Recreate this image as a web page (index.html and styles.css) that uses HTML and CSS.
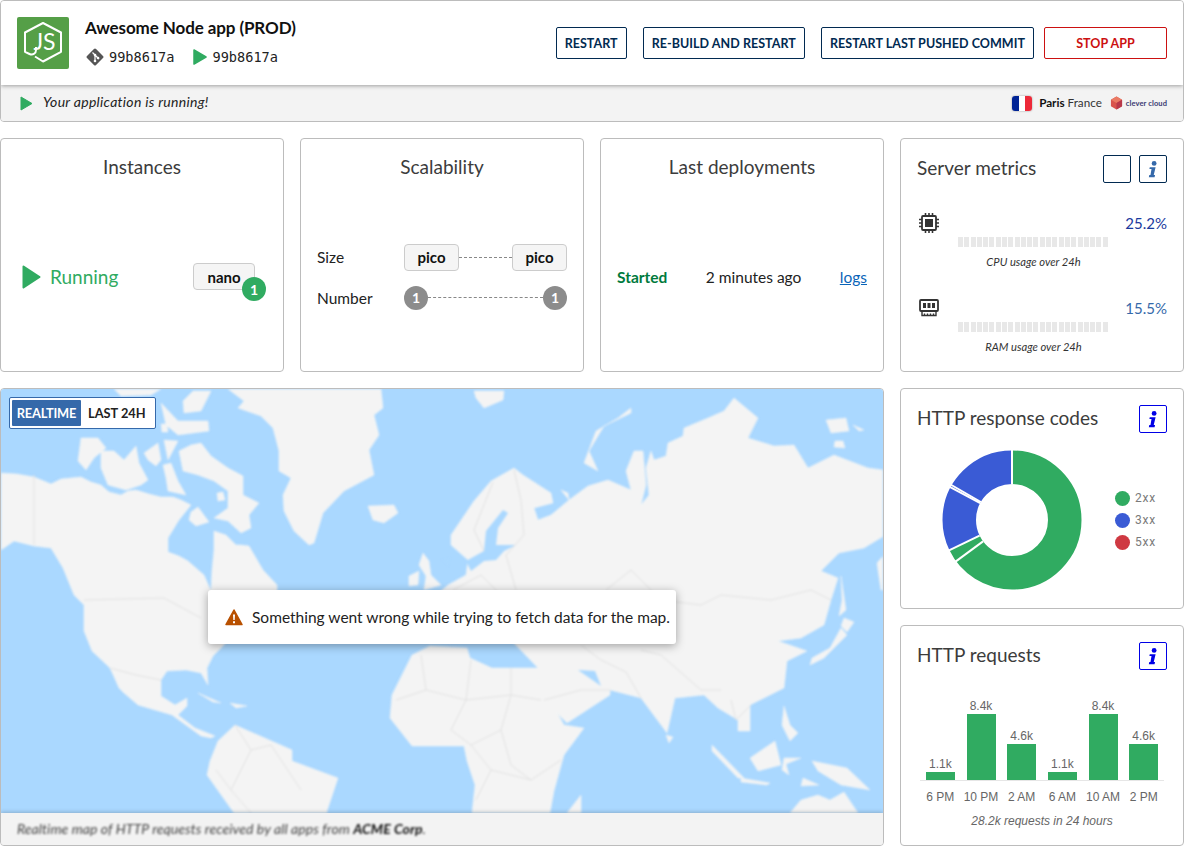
FILE: index.html
```html
<!DOCTYPE html>
<html lang="en">
<head>
<meta charset="utf-8">
<title>Awesome Node app</title>
<link rel="stylesheet" href="styles.css">
</head>
<body>
<div class="grid">
  <section class="card header">
    <div class="header-main">
      <svg class="app-logo" viewBox="0 0 52 52">
        <rect width="52" height="52" rx="2" fill="#559f47"/>
        <path class="logo-line" d="M18 39.500 L26 44.500 L44 34.800 V15.500 L26 6 L8 15.500 V34.800 L12.500 37 C15.500 38.200 19 37 19 33 V30"/>
        <text class="logo-text" x="27.500" y="33">JS</text>
      </svg>
      <div class="app-info">
        <div class="app-name">Awesome Node app (PROD)</div>
        <div class="commits">
          <span class="commit">
            <svg class="git-icon" viewBox="0 0 18 18"><rect x="2.600" y="2.600" width="12.800" height="12.800" rx="1.500" transform="rotate(45 9 9)" fill="#555"/><path d="M6.500 4.500 L13 11 M9 7 V13" stroke="#fff" stroke-width="1.200"/><circle cx="9" cy="7" r="1.300" fill="#fff"/><circle cx="9" cy="13" r="1.300" fill="#fff"/><circle cx="12" cy="10" r="1.300" fill="#fff"/></svg>
            <span class="hash">99b8617a</span>
          </span>
          <span class="commit">
            <svg class="play-icon" viewBox="0 0 14 16"><path d="M1 1 L13 8 L1 15 Z" fill="#30ab61" stroke="#30ab61" stroke-width="1.500" stroke-linejoin="round"/></svg>
            <span class="hash">99b8617a</span>
          </span>
        </div>
      </div>
      <div class="actions">
        <button class="btn">Restart</button>
        <button class="btn">Re-build and restart</button>
        <button class="btn">Restart last pushed commit</button>
        <button class="btn btn-danger">Stop app</button>
      </div>
    </div>
    <div class="header-band">
      <svg class="band-play" viewBox="0 0 13 15"><path d="M1 1 L12 7.500 L1 14 Z" fill="#30ab61" stroke="#30ab61" stroke-linejoin="round"/></svg>
      <span class="band-msg">Your application is running!</span>
      <span class="zone">
        <span class="flag"><i class="flag-b"></i><i class="flag-w"></i><i class="flag-r"></i></span>
        <span class="zone-name"><b>Paris</b> France</span>
        <svg class="cc-logo" viewBox="0 0 14 14"><path d="M7 0 L13 3.500 V10.500 L7 14 L1 10.500 V3.500 Z" fill="#d9544d"/><path d="M7 0 L13 3.500 L7 7 L1 3.500 Z" fill="#ea7a63"/><path d="M7 7 V14 L13 10.500 V3.500 Z" fill="#b8384a"/></svg>
        <span class="cc-name">clever cloud</span>
      </span>
    </div>
  </section>

  <section class="card tile">
    <h2 class="tile-title center">Instances</h2>
    <div class="tile-body instances">
      <svg class="run-icon" viewBox="0 0 19 24"><path d="M1.500 1.500 L17.500 12 L1.500 22.500 Z" fill="#30ab61" stroke="#30ab61" stroke-width="2" stroke-linejoin="round"/></svg>
      <span class="running">Running</span>
      <span class="flavor-wrap">
        <span class="flavor flavor-nano">nano</span>
        <span class="count count-green">1</span>
      </span>
    </div>
  </section>

  <section class="card tile">
    <h2 class="tile-title center">Scalability</h2>
    <div class="tile-body scal">
      <div class="scal-row">
        <span class="scal-label">Size</span>
        <span class="flavor">pico</span><span class="dash"></span><span class="flavor">pico</span>
      </div>
      <div class="scal-row">
        <span class="scal-label">Number</span>
        <span class="count count-gray">1</span><span class="dash"></span><span class="count count-gray">1</span>
      </div>
    </div>
  </section>

  <section class="card tile">
    <h2 class="tile-title center">Last deployments</h2>
    <div class="tile-body deploy">
      <span class="deploy-state">Started</span>
      <span class="deploy-time">2 minutes ago</span>
      <a class="deploy-logs" href="#">logs</a>
    </div>
  </section>

  <section class="card tile metrics">
    <div class="head-row">
      <h2 class="tile-title">Server metrics</h2>
      <button class="icon-btn"></button>
      <button class="icon-btn">
        <svg viewBox="0 0 28 28"><circle cx="15.200" cy="8" r="2.600" fill="#3569aa"/><path d="M10.500 12 H16.800 L14.800 20.500 H16.200 L15.700 22.800 H9.500 L10 20.500 H11.300 L12.400 14 H10.100 Z" fill="#3569aa"/></svg>
      </button>
    </div>
    <div class="metric metric-cpu">
      <svg class="metric-icon" viewBox="0 0 20 20">
        <rect x="3" y="3" width="14" height="14" rx="1" fill="none" stroke="#333" stroke-width="1.800"/>
        <rect x="6" y="6" width="8" height="8" fill="#333"/>
        <path d="M6.500 0 V3 M10 0 V3 M13.500 0 V3 M6.500 17 V20 M10 17 V20 M13.500 17 V20 M0 6.500 H3 M0 10 H3 M0 13.500 H3 M17 6.500 H20 M17 10 H20 M17 13.500 H20" stroke="#333" stroke-width="1.600"/>
      </svg>
      <span class="metric-value value-cpu">25.2%</span>
      <div class="spark"></div>
      <div class="metric-cap">CPU usage over 24h</div>
    </div>
    <div class="metric metric-ram">
      <svg class="metric-icon" viewBox="0 0 20 18">
        <rect x="1" y="1" width="18" height="11" rx="1" fill="none" stroke="#333" stroke-width="1.800"/>
        <path d="M4 4 H7 V9 H4 Z M8.500 4 H11.500 V9 H8.500 Z M13 4 H16 V9 H13 Z" fill="#333"/>
        <path d="M3 12 V16.500 H17 V12 M5.500 14.500 V16 M8.500 14.500 V16 M11.500 14.500 V16 M14.500 14.500 V16" fill="none" stroke="#333" stroke-width="1.400"/>
      </svg>
      <span class="metric-value value-ram">15.5%</span>
      <div class="spark"></div>
      <div class="metric-cap">RAM usage over 24h</div>
    </div>
  </section>

  <section class="card map-card">
    <div class="map">
      <svg class="world" viewBox="0 389 882 424" preserveAspectRatio="none">
        <g class="land">
          <path d="M0 473 L16 474 33 477 50 484 60 479 70 478 80 477 90 482 100 485 108 492 120 495 127 491 135 490 148 494 160 497 172 497 180 500 190 505 178 520 167 538 167 552 178 556 187 561 203 575 210 591 211 570 213 550 213 531 225 535 235 545 240 545 248 546 255 558 262 570 276 585 276 592 262 600 240 625 220 648 212 656 206 668 207 685 200 673 185 670 166 671 160 680 160 696 174 705 186 698 186 706 177 715 194 728 214 736 210 738 200 736 171 715 137 705 123 693 109 668 91 651 83 631 83 605 73 595 62 568 50 548 33 546 13 541 3 548 0 550 Z"/>
          <path d="M106 661 L112 668 123 693 118 688 Z"/>
          <path d="M80 438 L97 438 105 448 93 458 85 470 77 461 Z"/>
          <path d="M100 451 L113 451 123 460 135 446 138 463 147 480 140 485 125 490 107 485 100 468 Z"/>
          <path d="M160 403 L177 421 207 421 208 431 177 435 165 425 Z"/>
          <path d="M182 401 L192 391 210 391 200 411 183 413 Z"/>
          <path d="M113 389 L160 389 150 395 120 396 Z"/>
          <path d="M143 453 L157 443 160 460 155 466 147 460 Z"/>
          <path d="M163 440 L177 441 167 460 Z"/>
          <path d="M162 465 L170 463 177 481 185 495 167 491 165 478 Z"/>
          <path d="M160 424 L166 424 167 432 161 432 Z"/>
          <path d="M178 451 L190 445 200 443 210 456 227 468 242 476 242 495 258 503 248 515 250 528 240 533 227 521 213 518 227 508 227 491 213 481 197 475 182 471 Z"/>
          <path d="M190 512 L197 507 208 522 195 526 188 520 Z"/>
          <path d="M216 493 L222 492 224 500 217 501 Z"/>
          <path d="M227 389 L380 389 382 408 373 415 378 435 368 450 373 475 343 491 322 513 313 543 308 545 293 531 283 511 282 495 290 478 278 471 278 451 272 428 260 416 237 408 243 401 Z"/>
          <path d="M367 506 L393 505 397 513 383 523 372 520 Z"/>
          <path d="M422 553 L428 561 430 575 440 585 423 590 425 576 418 565 Z"/>
          <path d="M408 576 L418 571 417 585 408 586 Z"/>
          <path d="M473 391 L503 391 502 400 483 408 475 398 Z"/>
          <path d="M630 408 L617 418 595 431 583 463 597 471 588 451 603 426 630 413 Z"/>
          <path d="M825 420 L845 418 848 431 830 433 Z"/>
          <path d="M852 425 L863 430 858 431 Z"/>
          <path d="M834 441 L842 441 844 448 833 447 Z"/>
          <path d="M430 640 L430 600 447 585 465 575 467 560 450 545 450 535 473 501 490 481 513 468 522 475 550 493 552 503 533 508 537 520 550 515 568 500 560 490 567 493 568 500 587 486 607 480 630 490 625 471 633 451 642 451 645 485 640 505 648 495 645 468 650 451 653 460 665 456 667 443 682 436 683 428 707 418 723 411 733 398 757 418 747 438 773 446 793 445 807 468 833 455 867 468 883 470 883 536 863 548 838 553 820 571 837 578 830 600 823 625 800 638 777 641 806 651 786 661 783 688 749 705 749 731 737 731 737 720 717 708 703 695 674 698 666 733 640 698 609 690 609 695 566 723 543 700 537 678 537 668 510 640 Z"/>
          <path d="M876 563 L883 555 883 590 880 590 Z"/>
          <path d="M840 576 L845 610 838 616 841 600 Z"/>
          <path d="M843 618 L853 622 846 632 840 626 Z"/>
          <path d="M840 628 L846 635 823 658 809 665 811 658 829 648 Z"/>
          <path d="M537 668 L509 668 491 668 469 658 466 648 429 646 411 655 391 695 389 718 411 746 463 746 466 761 474 785 471 813 549 813 553 791 563 755 583 728 563 725 537 678 Z"/>
          <path d="M580 795 L580 813 566 813 Z"/>
          <path d="M234 725 L291 750 291 761 337 778 326 811 326 813 233 813 206 775 209 761 217 741 Z"/>
          <path d="M197 693 L220 703 212 702 Z"/>
          <path d="M229 703 L246 706 235 708 Z"/>
          <path d="M665 735 L672 737 668 743 Z"/>
          <path d="M711 745 L743 778 737 778 711 751 Z"/>
          <path d="M740 778 L769 783 766 785 740 782 Z"/>
          <path d="M774 741 L780 765 757 771 749 758 Z"/>
          <path d="M783 758 L800 758 785 764 788 775 781 770 Z"/>
          <path d="M811 761 L846 768 869 790 840 785 817 771 Z"/>
          <path d="M783 706 L789 725 797 733 789 741 781 725 Z"/>
          <path d="M789 813 L800 800 817 795 829 800 843 792 857 813 Z"/>
          <path d="M802 778 L818 785 800 786 Z"/>
        </g>
        <g class="water">
          <path d="M502 510 L507 513 497 528 495 545 515 545 503 551 495 560 483 561 470 571 465 561 483 551 485 531 Z"/>
          <path d="M577 670 L600 686 594 671 Z"/>
          <path d="M441 560 L449 558 447 566 Z"/>
        </g>
        <g class="borders">
          <path d="M33 475 V545"/>
          <path d="M83 600 L163 598 200 618"/>
          <path d="M109 668 L135 675 160 680"/>
          <path d="M492 482 L473 530 483 551"/>
          <path d="M513 470 L520 500 523 535 505 555 515 590"/>
          <path d="M452 590 L480 575 500 595"/>
          <path d="M605 590 L630 570 660 600 700 605 720 595 770 600 810 590 830 600"/>
          <path d="M640 650 L660 655 700 690 720 690"/>
          <path d="M580 645 L600 660 625 672 640 698"/>
          <path d="M543 700 L580 690 610 690"/>
          <path d="M730 700 L735 720 750 705"/>
          <path d="M420 655 L425 690 395 700 M425 690 L465 700 L510 695 L540 700"/>
          <path d="M465 700 L450 730 470 745 500 730 510 695 M500 730 L510 765 530 780 560 760 M470 745 L490 770 475 800 M490 770 L530 780 M510 668 V695 M470 660 L465 700"/>
          <path d="M234 725 L250 750 270 745 M250 750 L230 790 250 813 M270 745 L300 790 M215 770 L230 790"/>
        </g>
      </svg>
    </div>
    <div class="map-caption"><span class="map-caption-text">Realtime map of HTTP requests received by all apps from <b>ACME Corp</b>.</span></div>
    <div class="toggle">
      <span class="toggle-item toggle-on">Realtime</span>
      <span class="toggle-item">Last 24h</span>
    </div>
    <div class="map-error">
      <svg class="warn" viewBox="0 0 18 17"><path d="M9 1 L17 15.500 H1 Z" fill="#b85000" stroke="#b85000" stroke-width="1.500" stroke-linejoin="round"/><path d="M8 5.500 H10 L9.700 11 H8.300 Z M8 12.300 H10 V14.200 H8 Z" fill="#fff"/></svg>
      <span class="map-error-text">Something went wrong while trying to fetch data for the map.</span>
    </div>
  </section>

  <section class="card tile chart-card card-codes">
    <div class="head-row">
      <h2 class="tile-title">HTTP response codes</h2>
      <button class="icon-btn icon-btn-focus">
        <svg viewBox="0 0 28 28"><circle cx="15.200" cy="8" r="2.600" fill="#0000e6"/><path d="M10.500 12 H16.800 L14.800 20.500 H16.200 L15.700 22.800 H9.500 L10 20.500 H11.300 L12.400 14 H10.100 Z" fill="#0000e6"/></svg>
      </button>
    </div>
    <div class="donut-row">
      <svg class="donut" viewBox="0 0 140 140">
        <g fill="none" stroke-width="33.500" transform="rotate(-90 70 70)">
          <circle class="arc-green" cx="70" cy="70" r="52.750" pathLength="360" stroke-dasharray="244.300 360"/>
          <circle class="arc-blue" cx="70" cy="70" r="52.750" pathLength="360" stroke-dasharray="115.700 360" stroke-dashoffset="-244.300"/>
        </g>
        <g class="sep">
          <line x1="70" y1="34" x2="70" y2="-1"/>
          <line x1="70" y1="34" x2="70" y2="-1" transform="rotate(233.600 70 70)"/>
          <line x1="70" y1="34" x2="70" y2="-1" transform="rotate(244.300 70 70)"/>
          <line x1="70" y1="34" x2="70" y2="-1" transform="rotate(298 70 70)"/>
          <line x1="70" y1="34" x2="70" y2="-1" transform="rotate(300 70 70)"/>
        </g>
      </svg>
      <ul class="legend">
        <li><i class="dot dot-green"></i>2xx</li>
        <li><i class="dot dot-blue"></i>3xx</li>
        <li><i class="dot dot-red"></i>5xx</li>
      </ul>
    </div>
  </section>

  <section class="card tile chart-card card-requests">
    <div class="head-row">
      <h2 class="tile-title">HTTP requests</h2>
      <button class="icon-btn icon-btn-focus">
        <svg viewBox="0 0 28 28"><circle cx="15.200" cy="8" r="2.600" fill="#0000e6"/><path d="M10.500 12 H16.800 L14.800 20.500 H16.200 L15.700 22.800 H9.500 L10 20.500 H11.300 L12.400 14 H10.100 Z" fill="#0000e6"/></svg>
      </button>
    </div>
    <div class="bars">
      <div class="bar-col"><span class="bar-val">1.1k</span><i class="bar" style="height:8px"></i></div>
      <div class="bar-col"><span class="bar-val">8.4k</span><i class="bar" style="height:66px"></i></div>
      <div class="bar-col"><span class="bar-val">4.6k</span><i class="bar" style="height:36px"></i></div>
      <div class="bar-col"><span class="bar-val">1.1k</span><i class="bar" style="height:8px"></i></div>
      <div class="bar-col"><span class="bar-val">8.4k</span><i class="bar" style="height:66px"></i></div>
      <div class="bar-col"><span class="bar-val">4.6k</span><i class="bar" style="height:36px"></i></div>
    </div>
    <div class="bar-labels">
      <span>6 PM</span><span>10 PM</span><span>2 AM</span><span>6 AM</span><span>10 AM</span><span>2 PM</span>
    </div>
    <div class="bars-cap">28.2k requests in 24 hours</div>
  </section>
</div>
</body>
</html>
```
FILE: styles.css
```css
* { box-sizing: border-box; }
html, body { margin: 0; padding: 0; }
body {
  width: 1184px;
  height: 847px;
  overflow: hidden;
  background: #fff;
  color: #1a1a1a;
  font-family: "Lato", "Noto Sans", sans-serif;
  font-size: 16px;
}
.grid {
  display: grid;
  grid-template-columns: repeat(4, 284px);
  grid-template-rows: 122px 234px 221px 221px;
  column-gap: 16px;
  row-gap: 16px;
}
.card {
  border: 1px solid #bcbcbc;
  border-radius: 4px;
  background: #fff;
  overflow: hidden;
  position: relative;
}

/* header */
.header { grid-column: 1 / 5; display: flex; flex-direction: column; }
.header-main {
  height: 84px;
  display: flex;
  align-items: center;
  padding: 0 16px;
  background: #fff;
  box-shadow: 0 1px 4px rgba(0,0,0,.35);
  position: relative;
}
.app-logo { width: 52px; height: 52px; flex: none; }
.logo-line { fill: none; stroke: #fff; stroke-width: 2; stroke-linejoin: round; }
.logo-text { fill: #fff; font: 400 23px "Lato", sans-serif; text-anchor: middle; }
.app-info { margin-left: 16px; flex: 1; }
.app-name { font-size: 17px; font-weight: 700; color: #111; line-height: 22px; letter-spacing: -.1px; margin-top: -2px; }
.commits { display: flex; margin-top: 8px; gap: 19px; align-items: center; height: 20px; }
.commit { display: inline-flex; align-items: center; gap: 5px; }
.git-icon { width: 18px; height: 18px; margin-left: 1px; }
.play-icon { width: 14px; height: 16px; }
.hash { font: 13.6px "DejaVu Sans Mono", monospace; color: #222; }
.actions { display: flex; gap: 16px; }
.btn {
  height: 32px;
  padding: 0 8px;
  border: 1px solid #012a51;
  border-radius: 2px;
  background: #fff;
  color: #012a51;
  font: 700 12.5px "Lato", sans-serif;
  text-transform: uppercase;
  letter-spacing: .05px;
}
.btn-danger { border-color: #cc1111; color: #cc1111; width: 123px; margin-left: -6px; }
.header-band {
  flex: 1;
  display: flex;
  align-items: center;
  padding: 0 16px 0 19px;
  background: #f3f3f3;
  font-size: 14px;
}
.band-play { width: 13px; height: 15px; }
.band-msg { margin-left: 10px; font-style: italic; color: #222; flex: 1; letter-spacing: .3px; padding-bottom: 3px; }
.zone { display: flex; align-items: center; }
.flag {
  display: flex;
  width: 20px;
  height: 15px;
  border-radius: 3px;
  overflow: hidden;
  box-shadow: 0 0 2px rgba(0,0,0,.4);
}
.flag i { flex: 1; }
.flag-b { background: #002395; }
.flag-w { background: #fff; }
.flag-r { background: #ed2939; }
.zone-name { margin-left: 7px; font-size: 11.7px; color: #333; padding-bottom: 2px; }
.zone-name b { color: #111; }
.cc-logo { width: 13px; height: 14px; margin-left: 8px; }
.cc-name { margin-left: 3px; font-size: 7.500px; font-weight: 700; color: #3a3a72; letter-spacing: .1px; }

/* tiles */
.tile { padding: 16px; display: flex; flex-direction: column; }
.tile-title {
  margin: 0;
  font-size: 19px;
  font-weight: 400;
  line-height: 24px;
  color: #3c3c3c;
}
.center { text-align: center; }
.tile-body { flex: 1; align-items: center; padding-top: 19px; }
.instances { display: flex; padding-left: 5px; padding-right: 12px; }
.run-icon { width: 19px; height: 24px; }
.running { margin-left: 9px; font-size: 19px; color: #30ab61; flex: 1; }
.flavor-wrap { position: relative; display: inline-flex; }
.flavor {
  display: inline-flex;
  align-items: center;
  justify-content: center;
  height: 27px;
  width: 55px;
  flex: none;
  border: 1px solid #ccc;
  border-radius: 4px;
  background: #f5f5f5;
  font-size: 15px;
  font-weight: 700;
  color: #111;
}
.flavor-nano { width: 62px; }
.count {
  display: inline-flex;
  align-items: center;
  justify-content: center;
  width: 24px;
  height: 24px;
  flex: none;
  border-radius: 50%;
  color: #fff;
  font-size: 14px;
  font-weight: 700;
}
.count-green { position: absolute; right: -11px; bottom: -11px; background: #30ab61; }
.count-gray { background: #8c8c8c; }
.scal { display: flex; flex-direction: column; justify-content: center; gap: 15px; }
.scal-row { display: flex; align-items: center; width: 100%; }
.scal-row:first-child { height: 27px; }
.scal-row:last-child { height: 24px; }
.scal-label { width: 87px; color: #222; font-size: 15.5px; }
.dash { flex: 1; border-top: 1px dashed #888; }
.deploy { display: flex; justify-content: space-between; font-size: 15.5px; }
.deploy-state { font-weight: 700; color: #007a3d; }
.deploy-time { color: #222; }
.deploy-logs { color: #0a64b8; }

/* metrics */
.head-row { display: flex; align-items: center; gap: 8px; height: 28px; }
.head-row .tile-title { flex: 1; padding-bottom: 2px; }
.icon-btn {
  width: 28px;
  height: 28px;
  padding: 0;
  border: 1px solid #012a51;
  border-radius: 2px;
  background: #fff;
}
.icon-btn svg { display: block; width: 26px; height: 26px; }
.icon-btn-focus { border-color: #0000e6; }
.metric {
  display: grid;
  grid-template-columns: 41px 151px 1fr;
  grid-template-rows: 22px 13px 28px;
  align-items: center;
}
.metric-cpu { margin-top: 29px; }
.metric-ram { margin-top: 22px; }
.metric-icon { width: 20px; grid-column: 1; grid-row: 1; margin-left: 2px; }
.metric-value { grid-column: 2 / 4; grid-row: 1; justify-self: end; font-size: 15px; }
.value-cpu { color: #1a3a9e; }
.value-ram { color: #3569aa; }
.spark {
  grid-column: 2;
  grid-row: 2;
  align-self: end;
  height: 10px;
  background: repeating-linear-gradient(90deg, #e8e8e8 0, #e8e8e8 5px, #fff 5px, #fff 6.290px);
}
.metric-cap {
  grid-column: 2;
  grid-row: 3;
  text-align: center;
  font-size: 11.2px;
  font-style: italic;
  color: #333;
}

/* map */
.map-card { grid-column: 1 / 4; grid-row: 3 / 5; display: flex; flex-direction: column; }
.map { flex: 1; background: #aad8ff; overflow: hidden; min-height: 0; }
.world { display: block; width: 100%; height: 100%; filter: blur(1.200px); }
.land path { fill: #f4f4f4; stroke: #f4f4f4; stroke-width: .5; stroke-linejoin: round; }
.water path { fill: #aad8ff; }
.borders path { fill: none; stroke: #e2e2e2; stroke-width: 1; }
.map-caption {
  height: 32px;
  display: flex;
  align-items: center;
  padding: 0 16px;
  background: #f3f3f3;
  box-shadow: 0 -1px 4px rgba(0,0,0,.2);
  position: relative;
}
.map-caption-text { font-size: 14px; font-style: italic; color: #444; filter: blur(1px); letter-spacing: .08px; padding-bottom: 2px; }
.map-caption-text b { color: #111; }
.toggle {
  position: absolute;
  left: 8px;
  top: 8px;
  display: flex;
  padding: 2px;
  width: 147px;
  height: 32px;
  border: 1px solid #3569aa;
  border-radius: 2px;
  background: #fff;
}
.toggle-item {
  display: flex;
  align-items: center;
  justify-content: center;
  height: 26px;
  padding: 0 7px;
  font-size: 12.8px;
  font-weight: 700;
  text-transform: uppercase;
  color: #222;
}
.toggle-on { width: 69px; background: #3569aa; color: #fff; border-radius: 1px; letter-spacing: -.2px; }
.map-error {
  position: absolute;
  left: 207px;
  top: 201px;
  width: 468px;
  height: 54px;
  display: flex;
  align-items: center;
  padding: 0 16px 0 17px;
  gap: 9px;
  background: #fff;
  border-radius: 3px;
  box-shadow: 0 2px 10px rgba(0,0,0,.35);
  color: #222;
}
.warn { width: 18px; height: 17px; flex: none; }
.map-error-text { white-space: nowrap; font-size: 15.5px; padding-bottom: 1px; }

/* charts */
.donut-row { display: flex; align-items: center; margin-top: 17px; height: 140px; }
.donut { width: 140px; height: 140px; margin-left: 25px; }
.arc-green { stroke: #30ab61; }
.arc-blue { stroke: #3a5bd5; }
.sep line { stroke: #fff; stroke-width: 2; }
.legend {
  list-style: none;
  margin: 0 0 0 33px;
  padding: 0;
  font: 12px Roboto, sans-serif;
  color: #7a7a7a;
  letter-spacing: .8px;
}
.legend li { display: flex; align-items: center; height: 22px; }
.dot { width: 15px; height: 15px; border-radius: 50%; margin-right: 5px; }
.dot-green { background: #30ab61; }
.dot-blue { background: #3a5bd5; }
.dot-red { background: #cf3942; }
.bars {
  display: flex;
  align-items: flex-end;
  height: 92px;
  margin: 19px 3px 0;
  border-bottom: 1px solid #e6e6e6;
}
.bar-col { flex: 1; display: flex; flex-direction: column; align-items: center; }
.bar-val { font: 12px "Liberation Sans", sans-serif; color: #666; line-height: 15px; }
.bar { display: block; width: 29px; background: #30ab61; }
.bar-labels { display: flex; margin: 9px 3px 0; }
.bar-labels span { flex: 1; text-align: center; font: 12px "Liberation Sans", sans-serif; color: #666; }
.bars-cap { margin-top: 10px; text-align: center; font: italic 12px "Liberation Sans", sans-serif; color: #666; }
```
